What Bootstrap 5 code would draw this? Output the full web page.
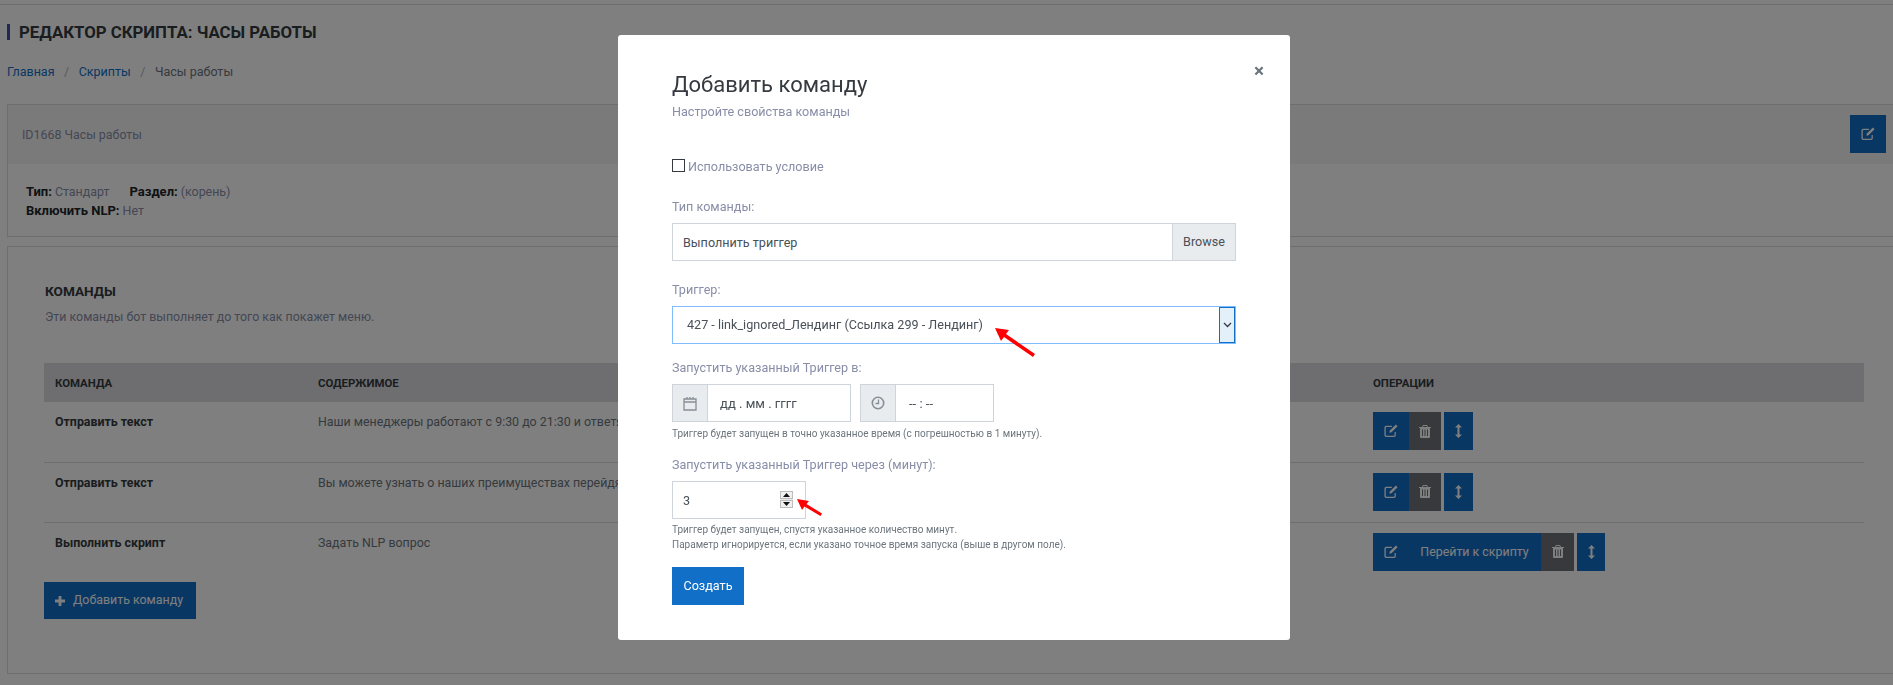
<!DOCTYPE html>
<html lang="ru">
<head>
<meta charset="utf-8">
<title>Редактор скрипта</title>
<link href="https://cdn.jsdelivr.net/npm/bootstrap@5.3.0/dist/css/bootstrap.min.css" rel="stylesheet">
<style>
html,body{height:685px;overflow:hidden}
body{font-family:Roboto,"Liberation Sans",sans-serif;font-size:12.4px;line-height:20px;color:#212529;background:#fff}
.top-rule{height:5px;border-bottom:1px solid #ddd}
.page-title{margin:19px 0 0 7px;padding-left:9px;border-left:3px solid #3f51b5;font-size:16.8px;line-height:16px;font-weight:700;text-transform:uppercase;color:#343a40}
.crumbs{margin:22px 0 0 7px;padding:0;--bs-breadcrumb-divider-color:#adb5bd;--bs-breadcrumb-item-padding-x:9.5px;--bs-breadcrumb-margin-bottom:0;--bs-breadcrumb-item-active-color:#6c757d;font-size:12.5px}
.crumbs a{color:#126fc7;text-decoration:none}
.panel-one,.panel-two{margin-left:7px;width:1900px;border:1px solid #ddd;border-radius:0;background:#fff}
.panel-one{margin-top:22px;height:133px}
.panel-one .card-header{height:59px;padding:0 0 0 14px;background:#f5f5f5;border:0;border-radius:0;color:#888ea8;display:flex;align-items:center;position:relative}
.head-edit{position:absolute;left:1842px;top:10px;width:36px;height:38px}
.props{padding:18px 0 0 18px;color:#888ea8;line-height:19px}
.props b{color:#212529;font-weight:700;font-size:13px}
.props .gap-prop{margin-left:17px}
.panel-two{margin-top:9px;height:428px;padding:34px 0 0 36px}
.sec-title{font-size:13.6px;line-height:20px;font-weight:700;text-transform:uppercase;color:#343a40;padding-left:1px}
.sec-sub{margin-top:6px;color:#888ea8;padding-left:1px}
.cmd-table{width:1820px;margin:36px 0 0;table-layout:fixed;--bs-table-bg:transparent;--bs-table-border-color:#ddd;color:#6c757d;font-size:12.4px}
.cmd-table th{background:#dcdde0;height:39px;padding:0 11px;font-size:11.4px;font-weight:700;text-transform:uppercase;color:#343a40;border:0;vertical-align:middle}
.cmd-table td{padding:10px 11px 0;vertical-align:top;height:60px;white-space:nowrap;overflow:hidden}
.cmd-table tr:last-child td{border-bottom:0;height:60px}
.cmd-table td:first-child{font-weight:700;color:#343a40}
.act{height:38px;border:0;border-radius:0;padding:0;display:inline-flex;align-items:center;justify-content:center;color:#fff;font-size:12.4px}
.act-blue{background:#126fc7}
.act-dark{background:#6e7278}
.w36{width:36px}.w35{width:35px}.w32{width:32px}.w29{width:29px;margin-left:3px}.w28{width:28px;margin-left:3px}.w133{width:133px}.w33{width:33px}
.add-btn{height:37px;width:152px;background:#126fc7;color:#fff;border-radius:0;border:0;font-size:12.4px;display:flex;align-items:center;padding:0 0 0 11px;gap:8px}
.ico{fill:currentColor;display:block}
.modal-backdrop.show{opacity:.5}
.add-dialog{max-width:672px;width:672px;margin:35px 0 0 618px}
.add-content{height:605px;border:0;border-radius:3px;padding:37px 54px 0;position:relative;color:#495057;font-size:12.6px}
.close-x{position:absolute;right:26px;top:27px;background:none;border:0;padding:0;font-size:19px;line-height:18px;font-weight:700;color:#6c757d}
.add-title{font-size:22px;line-height:26px;font-weight:400;color:#343a40;margin:0}
.add-sub{margin-top:4px;color:#888ea8;line-height:20px}
.cond{margin-top:35px;display:flex;align-items:center;gap:3px;color:#888ea8}
.cond i{display:block;width:13px;height:13px;border:1px solid #343a40;margin-top:-4px}
.fld-lbl{display:block;color:#888ea8;line-height:20px;margin:0 0 6px}
.mt20{margin-top:20px}.mt19{margin-top:19px}.mt14{margin-top:14px}
.fc{height:38px;border:1px solid #ced4da;border-radius:0;padding:0 10px;font-size:12.6px;color:#495057;background:#fff;box-shadow:none;outline:0}
.fc-wrap{width:564px}
.addon{border-radius:0;font-size:12.6px;color:#495057;background:#e9ecef;border:1px solid #ced4da;height:38px}
.browse{width:64px;padding:0;justify-content:center}
.trig{position:relative;width:564px}
.trig select{width:100%;height:38px;border:1px solid #80bdff;appearance:none;padding:0 14px;color:#495057;font-size:12.6px;background:#fff;border-radius:0;outline:0}
.caret-box{position:absolute;right:1px;top:1px;width:16px;height:36px;background:#e3f0fa;border:1px solid #126fc7;display:flex;align-items:center;justify-content:center}
.date-grp{width:179px}.time-grp{width:134px;margin-left:9px}
.ig-ico{width:36px;padding:0;justify-content:center;color:#868e96}
.date-grp .fc,.time-grp .fc{padding-left:13px;color:#495057;font-size:13px}
.date-grp .fc{padding-left:12px}
.hint{font-size:10px;line-height:15px;color:#6c757d;margin-top:4px}
.hint-two{margin-top:3px}
.num-wrap{position:relative;width:134px}
.num{display:block;width:100%;-moz-appearance:textfield}
.num::-webkit-inner-spin-button{appearance:none;margin:0}
.spin{position:absolute;left:108px;top:10px;width:13px;height:17px;background:#e6e6e6;display:flex;flex-direction:column;justify-content:space-between}
.spin span{display:flex;align-items:center;justify-content:center;height:8px;background:#f0f0f0;border:1px solid #bdbdbd}
.go{margin-top:15px;width:72px;height:38px;border:0;border-radius:0;background:#126fc7;color:#fff;font-size:12.6px;padding:0}
.arrow-a{position:absolute;left:377px;top:293px}
.arrow-b{position:absolute;left:179px;top:464px}
</style>
</head>
<body>
<div class="top-rule"></div>
<h1 class="page-title">Редактор скрипта: Часы работы</h1>
<ol class="breadcrumb crumbs">
  <li class="breadcrumb-item"><a href="#">Главная</a></li>
  <li class="breadcrumb-item"><a href="#">Скрипты</a></li>
  <li class="breadcrumb-item active">Часы работы</li>
</ol>
<div class="card panel-one">
  <div class="card-header">ID1668 Часы работы
    <button class="act act-blue head-edit" aria-label="Редактировать"><svg class="ico" width="14" height="14" viewBox="0 0 16 16"><path d="M2.5 2H9v1.4H2.9a.9.9 0 0 0-.9.9v8.3c0 .5.4.9.9.9h8.3c.5 0 .9-.4.9-.9V9.2h1.4v3.6a2 2 0 0 1-2 2H2.500a2 2 0 0 1-2-2V4a2 2 0 0 1 2-2z"/><path d="M13.600.6l1.900 1.900-6.900 6.900-2.500.6.600-2.500z"/></svg></button>
  </div>
  <div class="props">
    <div><b>Тип:</b> Стандарт <span class="gap-prop"><b>Раздел:</b> (корень)</span></div>
    <div><b>Включить NLP:</b> Нет</div>
  </div>
</div>
<div class="card panel-two">
  <div class="sec-title">Команды</div>
  <div class="sec-sub">Эти команды бот выполняет до того как покажет меню.</div>
  <table class="table cmd-table">
    <colgroup><col style="width:263px"><col style="width:1055px"><col></colgroup>
    <thead><tr><th>Команда</th><th>Содержимое</th><th>Операции</th></tr></thead>
    <tbody>
      <tr><td>Отправить текст</td><td>Наши менеджеры работают с 9:30 до 21:30 и ответят на все ваши вопросы.</td><td>
        <div class="d-flex">
          <button class="act act-blue w36" aria-label="Изменить"><svg class="ico" width="14" height="14" viewBox="0 0 16 16"><path d="M2.5 2H9v1.4H2.9a.9.9 0 0 0-.9.9v8.3c0 .5.4.9.9.9h8.3c.5 0 .9-.4.9-.9V9.2h1.4v3.6a2 2 0 0 1-2 2H2.500a2 2 0 0 1-2-2V4a2 2 0 0 1 2-2z"/><path d="M13.600.6l1.900 1.900-6.900 6.900-2.500.6.600-2.500z"/></svg></button>
          <button class="act act-dark w32" aria-label="Удалить"><svg class="ico" width="12" height="13" viewBox="0 0 12 13"><path d="M4 0h4l1 2h3v1h-1v9a1 1 0 0 1-1 1H2a1 1 0 0 1-1-1V3H0V2h3zM4.500 1 4 2h4l-.5-1zM3 4.500v6.500h1V4.500zm2.500 0v6.500h1V4.500zm2.500 0v6.500h1V4.500z" fill-rule="evenodd"/></svg></button>
          <button class="act act-blue w29" aria-label="Переместить"><svg class="ico" width="7" height="14" viewBox="0 0 7 14"><path d="M3.500 0 7 3.400H4.500v7.200H7L3.500 14 0 10.600h2.500V3.400H0z"/></svg></button>
        </div></td></tr>
      <tr><td>Отправить текст</td><td>Вы можете узнать о наших преимуществах перейдя по ссылке.</td><td>
        <div class="d-flex">
          <button class="act act-blue w36" aria-label="Изменить"><svg class="ico" width="14" height="14" viewBox="0 0 16 16"><path d="M2.5 2H9v1.4H2.9a.9.9 0 0 0-.9.9v8.3c0 .5.4.9.9.9h8.3c.5 0 .9-.4.9-.9V9.2h1.4v3.6a2 2 0 0 1-2 2H2.500a2 2 0 0 1-2-2V4a2 2 0 0 1 2-2z"/><path d="M13.600.6l1.900 1.900-6.900 6.900-2.500.6.600-2.500z"/></svg></button>
          <button class="act act-dark w32" aria-label="Удалить"><svg class="ico" width="12" height="13" viewBox="0 0 12 13"><path d="M4 0h4l1 2h3v1h-1v9a1 1 0 0 1-1 1H2a1 1 0 0 1-1-1V3H0V2h3zM4.500 1 4 2h4l-.5-1zM3 4.500v6.500h1V4.500zm2.500 0v6.500h1V4.500zm2.500 0v6.500h1V4.500z" fill-rule="evenodd"/></svg></button>
          <button class="act act-blue w29" aria-label="Переместить"><svg class="ico" width="7" height="14" viewBox="0 0 7 14"><path d="M3.500 0 7 3.400H4.500v7.200H7L3.500 14 0 10.600h2.500V3.400H0z"/></svg></button>
        </div></td></tr>
      <tr><td>Выполнить скрипт</td><td>Задать NLP вопрос</td><td>
        <div class="d-flex">
          <button class="act act-blue w35" aria-label="Изменить"><svg class="ico" width="14" height="14" viewBox="0 0 16 16"><path d="M2.5 2H9v1.4H2.9a.9.9 0 0 0-.9.9v8.3c0 .5.4.9.9.9h8.3c.5 0 .9-.4.9-.9V9.2h1.4v3.6a2 2 0 0 1-2 2H2.500a2 2 0 0 1-2-2V4a2 2 0 0 1 2-2z"/><path d="M13.600.6l1.900 1.900-6.900 6.900-2.500.6.600-2.500z"/></svg></button>
          <button class="act act-blue w133">Перейти к скрипту</button>
          <button class="act act-dark w33" aria-label="Удалить"><svg class="ico" width="12" height="13" viewBox="0 0 12 13"><path d="M4 0h4l1 2h3v1h-1v9a1 1 0 0 1-1 1H2a1 1 0 0 1-1-1V3H0V2h3zM4.500 1 4 2h4l-.5-1zM3 4.500v6.500h1V4.500zm2.500 0v6.500h1V4.500zm2.500 0v6.500h1V4.500z" fill-rule="evenodd"/></svg></button>
          <button class="act act-blue w28" aria-label="Переместить"><svg class="ico" width="7" height="14" viewBox="0 0 7 14"><path d="M3.500 0 7 3.400H4.500v7.200H7L3.500 14 0 10.600h2.500V3.400H0z"/></svg></button>
        </div></td></tr>
    </tbody>
  </table>
  <button class="btn add-btn"><svg class="ico" width="10" height="10" viewBox="0 0 10 10"><path d="M3.600 0h2.800v3.600H10v2.800H6.400V10H3.600V6.400H0V3.600h3.600z"/></svg>Добавить команду</button>
</div>

<div class="modal-backdrop show"></div>
<div class="modal d-block" tabindex="-1" role="dialog">
  <div class="modal-dialog add-dialog">
    <div class="modal-content add-content">
      <button class="close-x" aria-label="Закрыть">×</button>
      <h5 class="add-title">Добавить команду</h5>
      <div class="add-sub">Настройте свойства команды</div>
      <label class="cond"><i></i>Использовать условие</label>
      <label class="fld-lbl mt20">Тип команды:</label>
      <div class="input-group fc-wrap">
        <input class="form-control fc" value="Выполнить триггер" readonly>
        <span class="input-group-text addon browse">Browse</span>
      </div>
      <label class="fld-lbl mt19">Триггер:</label>
      <div class="trig">
        <select><option>427 - link_ignored_Лендинг (Ссылка 299 - Лендинг)</option></select>
        <span class="caret-box"><svg width="9" height="6" viewBox="0 0 9 6"><path d="M1 1l3.500 3.500L8 1" fill="none" stroke="#343a40" stroke-width="1.300"/></svg></span>
      </div>
      <label class="fld-lbl mt14">Запустить указанный Триггер в:</label>
      <div class="d-flex">
        <div class="input-group date-grp flex-nowrap">
          <span class="input-group-text addon ig-ico"><svg width="14" height="15" viewBox="0 0 14 15"><path d="M1 3h12v11H1zM1 6h12M4 1v2M7 1v2M10 1v2" fill="none" stroke="#868e96" stroke-width="1.300"/></svg></span>
          <input class="form-control fc" value="дд . мм . гггг" readonly>
        </div>
        <div class="input-group time-grp flex-nowrap">
          <span class="input-group-text addon ig-ico"><svg width="14" height="14" viewBox="0 0 14 14"><circle cx="7" cy="7" r="5.700" fill="none" stroke="#868e96" stroke-width="1.600"/><path d="M7.500 3.500v4H4.500" fill="none" stroke="#868e96" stroke-width="1.300"/></svg></span>
          <input class="form-control fc" value="-- : --" readonly>
        </div>
      </div>
      <div class="hint">Триггер будет запущен в точно указанное время (с погрешностью в 1 минуту).</div>
      <label class="fld-lbl mt14">Запустить указанный Триггер через (минут):</label>
      <div class="num-wrap">
        <input class="form-control fc num" type="number" value="3">
        <span class="spin"><span><svg width="7" height="4" viewBox="0 0 7 4"><path d="M3.500 0 7 4H0z" fill="#111"/></svg></span><span><svg width="7" height="4" viewBox="0 0 7 4"><path d="M0 0h7L3.500 4z" fill="#111"/></svg></span></span>
      </div>
      <div class="hint hint-two">Триггер будет запущен, спустя указанное количество минут.<br>Параметр игнорируется, если указано точное время запуска (выше в другом поле).</div>
      <button class="btn go">Создать</button>
      <svg class="arrow-a" width="40" height="29" viewBox="0 0 40 29"><path d="M0 0 14 2 11 6 40 26 38 29 9 9 6 13z" fill="#f00"/></svg>
      <svg class="arrow-b" width="25" height="17" viewBox="0 0 25 17"><path d="M0 0 12 2 9.500 5 25 14.500 23.500 17 7.500 7.500 5 11z" fill="#f00"/></svg>
    </div>
  </div>
</div>
<script src="https://cdn.jsdelivr.net/npm/bootstrap@5.3.0/dist/js/bootstrap.bundle.min.js"></script>
</body>
</html>
